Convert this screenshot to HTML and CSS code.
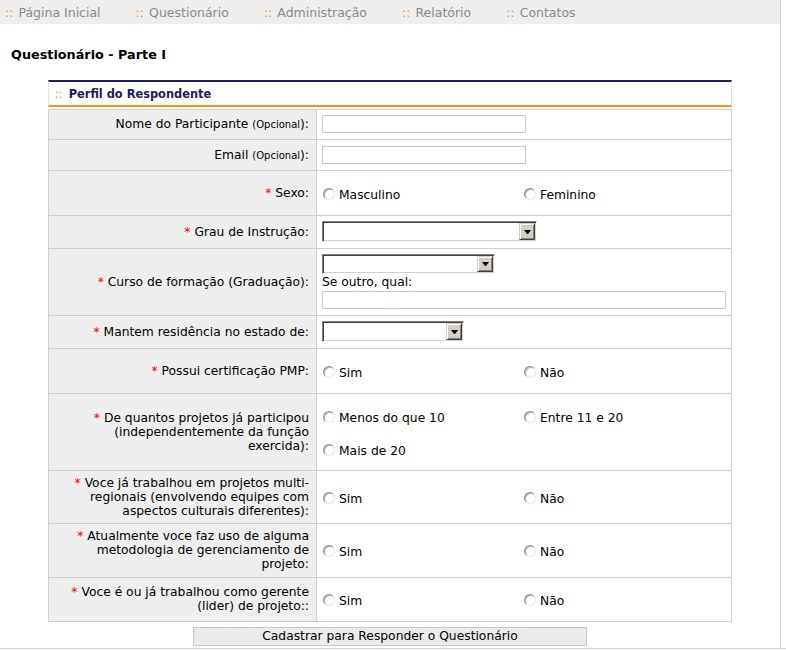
FILE: index.html
```html
<!DOCTYPE html>
<html lang="pt-BR">
<head>
<meta charset="utf-8">
<title>Questionário - Parte I</title>
<link rel="stylesheet" href="styles.css">
</head>
<body>
<div class="page">
  <ul class="nav">
    <li><span class="dots">::</span>Página Inicial</li>
    <li><span class="dots">::</span>Questionário</li>
    <li><span class="dots">::</span>Administração</li>
    <li><span class="dots">::</span>Relatório</li>
    <li><span class="dots">::</span>Contatos</li>
  </ul>

  <h1 class="title">Questionário - Parte I</h1>

  <div class="panel">
    <div class="panel-head"><span class="dots">::</span>Perfil do Respondente</div>
    <table class="form">
      <colgroup><col class="c-lbl"><col class="c-val"></colgroup>
      <tr>
        <td class="lbl">Nome do Participante <small>(Opcional</small>):</td>
        <td><input class="txt" type="text"></td>
      </tr>
      <tr class="loose">
        <td class="lbl">Email <small>(Opcional</small>):</td>
        <td><input class="txt" type="text"></td>
      </tr>
      <tr>
        <td class="lbl"><span class="req">*</span> Sexo:</td>
        <td class="radios">
          <div class="opts">
            <label class="opt"><input type="radio" name="sexo">Masculino</label>
            <label class="opt"><input type="radio" name="sexo">Feminino</label>
          </div>
        </td>
      </tr>
      <tr>
        <td class="lbl"><span class="req">*</span> Grau de Instrução:</td>
        <td><span class="sel sel-grau"><select></select><span class="drop"></span></span></td>
      </tr>
      <tr>
        <td class="lbl"><span class="req">*</span> Curso de formação (Graduação):</td>
        <td>
          <span class="sel sel-curso"><select></select><span class="drop"></span></span>
          <div class="other">Se outro, qual:</div>
          <input class="txt txt-wide" type="text">
        </td>
      </tr>
      <tr>
        <td class="lbl"><span class="req">*</span> Mantem residência no estado de:</td>
        <td><span class="sel sel-estado"><select></select><span class="drop"></span></span></td>
      </tr>
      <tr>
        <td class="lbl"><span class="req">*</span> Possui certificação PMP:</td>
        <td class="radios">
          <div class="opts">
            <label class="opt"><input type="radio" name="pmp">Sim</label>
            <label class="opt"><input type="radio" name="pmp">Não</label>
          </div>
        </td>
      </tr>
      <tr class="tight">
        <td class="lbl"><span class="req">*</span> De quantos projetos já participou<br>(independentemente da função<br>exercida):</td>
        <td class="radios">
          <div class="opts">
            <label class="opt"><input type="radio" name="qtd">Menos do que 10</label>
            <label class="opt"><input type="radio" name="qtd">Entre 11 e 20</label>
            <label class="opt"><input type="radio" name="qtd">Mais de 20</label>
          </div>
        </td>
      </tr>
      <tr class="tight">
        <td class="lbl"><span class="req">*</span> Voce já trabalhou em projetos multi-<br>regionais (envolvendo equipes com<br>aspectos culturais diferentes):</td>
        <td class="radios">
          <div class="opts">
            <label class="opt"><input type="radio" name="multi">Sim</label>
            <label class="opt"><input type="radio" name="multi">Não</label>
          </div>
        </td>
      </tr>
      <tr>
        <td class="lbl"><span class="req">*</span> Atualmente voce faz uso de alguma<br>metodologia de gerenciamento de<br>projeto:</td>
        <td class="radios">
          <div class="opts">
            <label class="opt"><input type="radio" name="metod">Sim</label>
            <label class="opt"><input type="radio" name="metod">Não</label>
          </div>
        </td>
      </tr>
      <tr>
        <td class="lbl"><span class="req">*</span> Voce é ou já trabalhou como gerente<br>(lider) de projeto::</td>
        <td class="radios">
          <div class="opts">
            <label class="opt opt-short"><input type="radio" name="gerente">Sim</label>
            <label class="opt opt-short"><input type="radio" name="gerente">Não</label>
          </div>
        </td>
      </tr>
    </table>
    <div class="actions">
      <button type="button" class="btn">Cadastrar para Responder o Questionário</button>
    </div>
  </div>
</div>
<div class="footer"></div>
</body>
</html>
```

FILE: styles.css
```css
* {
  box-sizing: border-box;
}

body {
  margin: 0;
  font-family: "DejaVu Sans", Verdana, sans-serif;
  font-size: 12.3px;
  color: #000;
  background: #fff;
}

.page {
  width: 781px;
  min-height: 648px;
  border-right: 1px solid #cfcfcf;
}

/* top navigation */
.nav {
  display: flex;
  align-items: center;
  height: 24px;
  margin: 0;
  padding: 0 0 0 5px;
  list-style: none;
  background: #eeeeee;
}

.nav li {
  margin-right: 35px;
  color: #8a8a8a;
  font-size: 12.5px;
  line-height: 14px;
  padding-top: 1px;
}

.dots {
  color: #f7941d;
  margin-right: 5px;
}

.title {
  margin: 0;
  padding: 23px 0 18px 11px;
  font-size: 12.8px;
  line-height: 15px;
  font-weight: bold;
}

/* panel */
.panel {
  margin-left: 48px;
  width: 684px;
}

.panel-head {
  display: flex;
  align-items: center;
  height: 27px;
  padding: 1px 0 0 6px;
  border-top: 2px solid #1e1b5f;
  border-bottom: 2px solid #f7941d;
  border-left: 1px dotted #c8c8c8;
  border-right: 1px dotted #c8c8c8;
  color: #1e1b5f;
  font-weight: bold;
  font-size: 11.4px;
}

.panel-head .dots {
  font-weight: normal;
  margin-right: 6px;
}

.form {
  width: 684px;
  margin-top: 2px;
  border-collapse: collapse;
  table-layout: fixed;
}

.c-lbl {
  width: 268px;
}

.form td {
  border: 1px solid #cfcfcf;
  padding: 5px 5px 6px;
  line-height: 14px;
  vertical-align: middle;
}

.form .tight td {
  padding-bottom: 5px;
}

.form .loose td {
  padding-top: 6px;
}

.form td.lbl {
  background: #eeeeee;
  text-align: right;
  padding-right: 7px;
}

.lbl small {
  font-size: 10px;
}

.req {
  color: #ff0000;
}

/* text inputs */
.txt {
  display: block;
  width: 204px;
  height: 18px;
  margin: 0;
  padding: 0 2px;
  border: 1px solid #c8c8c8;
  background: #fff;
  font: inherit;
}

.txt-wide {
  width: 404px;
}

.other {
  line-height: 17px;
  height: 17px;
}

/* classic select boxes */
.sel {
  display: flex;
  height: 21px;
  padding: 1px;
  border: 1px solid;
  border-color: #808080 #ffffff #ffffff #808080;
  box-shadow: inset 1px 1px 0 #404040, inset -1px -1px 0 #d4d0c8;
  background: #fff;
}

.sel select {
  flex: 1;
  min-width: 0;
  border: 0;
  padding: 0;
  margin: 0;
  background: transparent;
  -webkit-appearance: none;
  appearance: none;
  font: inherit;
}

.sel-grau {
  width: 215px;
}

.sel-curso {
  width: 173px;
  height: 20px;
}

.sel-estado {
  width: 142px;
}

.drop {
  display: flex;
  align-items: center;
  justify-content: center;
  width: 16px;
  background: #d4d0c8;
  border: 1px solid;
  border-color: #d4d0c8 #404040 #404040 #d4d0c8;
  box-shadow: inset 1px 1px 0 #ffffff, inset -1px -1px 0 #808080;
}

.drop::before {
  content: "";
  width: 1px;
  height: 0;
  border-left: 3px solid transparent;
  border-right: 3px solid transparent;
  border-top: 4px solid #000;
}

/* radio groups */
.opts {
  display: grid;
  grid-template-columns: 201px 1fr;
}

.opt {
  display: flex;
  align-items: center;
  height: 33px;
  padding-top: 4px;
}

.opt-short {
  height: 32px;
}

.opt input {
  -webkit-appearance: none;
  appearance: none;
  width: 12px;
  height: 12px;
  margin: 0 4px 0 1px;
  border-radius: 50%;
  border: 1px solid;
  border-color: #8c8c8c #e6e6e6 #e6e6e6 #8c8c8c;
  box-shadow: inset 1px 1px 0 #b4b4b4;
  background: #fff;
  position: relative;
  top: -1px;
}

/* submit */
.actions {
  display: flex;
  justify-content: center;
  padding-top: 5px;
}

.btn {
  width: 394px;
  height: 19px;
  padding: 0;
  border: 1px solid #c8c8c8;
  background: #ebebeb;
  color: #000;
  font: 12.3px "DejaVu Sans", Verdana, sans-serif;
  line-height: 15px;
}

.footer {
  border-top: 1px solid #d6d0c8;
}
```
